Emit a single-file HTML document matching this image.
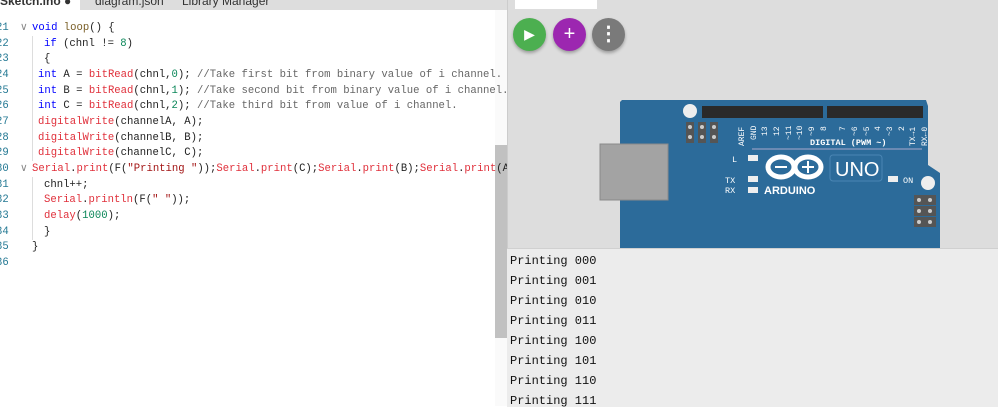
<!DOCTYPE html>
<html><head><style>
body{margin:0;width:998px;height:406px;overflow:hidden;background:#fff;position:relative;font-family:"Liberation Sans",sans-serif}
.tabbar{position:absolute;left:0;top:0;width:507px;height:10px;background:#ddd;z-index:3}
.tab{position:absolute;top:-6px;font-size:12px;color:#333}
.code{position:absolute;left:0;top:5px;width:507px;height:401px;overflow:hidden;font-family:"Liberation Mono",monospace;font-size:10.6px;white-space:pre;color:#222;z-index:2}
.ln{position:absolute;left:-4px;color:#237893;width:20px}
.l{position:absolute;height:15.66px;line-height:15.66px}
.k{color:#0000ff}.f{color:#e0303b}.fn{color:#795e26}.n{color:#098658}.c{color:#666}.s{color:#a31515}
.ar{position:absolute;left:20px;color:#888}
.guide{position:absolute;left:32px;width:1px;background:#ddd}
.scroll{position:absolute;left:495px;top:10px;width:12px;height:396px;background:#fafafa}
.thumb{position:absolute;left:495px;top:145px;width:12px;height:193px;background:#c1c1c1}
.right{position:absolute;left:507px;top:0;width:491px;height:406px;background:#ddd;border-left:1px solid #ccc;z-index:2}
.serial{position:absolute;left:507px;top:248px;width:491px;height:158px;background:#ececec;border-top:1px solid #d0d0d0;font-family:"Liberation Mono",monospace;font-size:12px;color:#111;z-index:4}
.serial div{position:absolute;left:3px}
.btn{position:absolute;top:18px;width:33px;height:33px;border-radius:50%;box-shadow:0 2px 3px rgba(0,0,0,.3);color:#fff;text-align:center;line-height:33px;font-size:20px;z-index:4}
svg{z-index:3}
</style></head><body>
<div class="tabbar"><div style="position:absolute;left:0;top:0;width:80px;height:10px;background:#fff"></div>
<span class="tab" style="left:0;font-weight:bold">Sketch.ino ●</span><span class="tab" style="left:95px">diagram.json</span><span class="tab" style="left:182px">Library Manager</span></div>
<div class="scroll"></div><div class="thumb"></div>
<div class="code">
<div class="guide" style="top:31px;height:125px"></div>
<div class="guide" style="top:172px;height:63px"></div>
<div class="l ln" style="top:-8px">20</div>
<div class="l ar" style="top:16px">∨</div><div class="l ar" style="top:157px">∨</div>
<div class="l" style="top:16px;left:32px"><span class="k">void</span> <span class="fn">loop</span>() {</div>
<div class="l" style="top:31.7px;left:44px"><span class="k">if</span> (chnl != <span class="n">8</span>)</div>
<div class="l" style="top:47.3px;left:44px">{</div>
<div class="l" style="top:63px;left:38px"><span class="k">int</span> A = <span class="f">bitRead</span>(chnl,<span class="n">0</span>); <span class="c">//Take first bit from binary value of i channel.</span></div>
<div class="l" style="top:78.6px;left:38px"><span class="k">int</span> B = <span class="f">bitRead</span>(chnl,<span class="n">1</span>); <span class="c">//Take second bit from binary value of i channel.</span></div>
<div class="l" style="top:94.3px;left:38px"><span class="k">int</span> C = <span class="f">bitRead</span>(chnl,<span class="n">2</span>); <span class="c">//Take third bit from value of i channel.</span></div>
<div class="l" style="top:110px;left:38px"><span class="f">digitalWrite</span>(channelA, A);</div>
<div class="l" style="top:125.6px;left:38px"><span class="f">digitalWrite</span>(channelB, B);</div>
<div class="l" style="top:141.3px;left:38px"><span class="f">digitalWrite</span>(channelC, C);</div>
<div class="l" style="top:157px;left:32px"><span class="f">Serial</span>.<span class="f">print</span>(F(<span class="s">"Printing "</span>));<span class="f">Serial</span>.<span class="f">print</span>(C);<span class="f">Serial</span>.<span class="f">print</span>(B);<span class="f">Serial</span>.<span class="f">print</span>(A</div>
<div class="l" style="top:172.6px;left:44px">chnl++;</div>
<div class="l" style="top:188.3px;left:44px"><span class="f">Serial</span>.<span class="f">println</span>(F(<span class="s">" "</span>));</div>
<div class="l" style="top:204px;left:44px"><span class="f">delay</span>(<span class="n">1000</span>);</div>
<div class="l" style="top:219.6px;left:44px">}</div>
<div class="l" style="top:235.3px;left:32px">}</div>
<div class="l ln" style="top:16px">21</div><div class="l ln" style="top:31.7px">22</div><div class="l ln" style="top:47.3px">23</div><div class="l ln" style="top:63px">24</div><div class="l ln" style="top:78.6px">25</div><div class="l ln" style="top:94.3px">26</div><div class="l ln" style="top:110px">27</div><div class="l ln" style="top:125.6px">28</div><div class="l ln" style="top:141.3px">29</div><div class="l ln" style="top:157px">30</div><div class="l ln" style="top:172.6px">31</div><div class="l ln" style="top:188.3px">32</div><div class="l ln" style="top:204px">33</div><div class="l ln" style="top:219.6px">34</div><div class="l ln" style="top:235.3px">35</div><div class="l ln" style="top:251px">36</div>
</div>
<div class="right"></div>
<div style="position:absolute;left:515px;top:0;width:82px;height:9px;background:#fff;z-index:3"></div>
<div class="btn" style="left:513px;background:#4caf50;font-size:14px">▶</div>
<div class="btn" style="left:553px;background:#9c27b0">+</div>
<div class="btn" style="left:592px;background:#7a7a7a;font-weight:bold">⋮</div>
<svg style="position:absolute;left:0;top:0" width="998" height="406" font-family="Liberation Mono,monospace">
<path d="M622 100 H926 L928 106 V165 L940 173 V248 H620 V102 Z" fill="#2c6b9a"/>
<rect x="600" y="144" width="68" height="56" fill="#a3a3a3" stroke="#8a8a8a"/>
<circle cx="690" cy="111" r="7" fill="#eee"/>
<circle cx="928" cy="183" r="7" fill="#eee"/>
<rect x="702" y="106" width="121" height="12" fill="#2a2a2a"/>
<rect x="827" y="106" width="96" height="12" fill="#2a2a2a"/>
<g fill="#555"><rect x="686" y="122" width="8" height="21"/><rect x="698" y="122" width="8" height="21"/><rect x="710" y="122" width="8" height="21"/>
<rect x="914" y="195" width="22" height="10"/><rect x="914" y="206" width="22" height="10"/><rect x="914" y="217" width="22" height="10"/></g>
<g fill="#ccc"><circle cx="690" cy="127" r="2"/><circle cx="690" cy="137" r="2"/><circle cx="702" cy="127" r="2"/><circle cx="702" cy="137" r="2"/><circle cx="714" cy="127" r="2"/><circle cx="714" cy="137" r="2"/>
<circle cx="919" cy="200" r="2"/><circle cx="930" cy="200" r="2"/><circle cx="919" cy="211" r="2"/><circle cx="930" cy="211" r="2"/><circle cx="919" cy="222" r="2"/><circle cx="930" cy="222" r="2"/></g>
<line x1="752" y1="149" x2="922" y2="149" stroke="#aac" stroke-width="1"/>
<text x="810" y="145" fill="#fff" font-size="8.5" font-weight="bold">DIGITAL (PWM ~)</text>
<g fill="#fff" font-size="8" transform="rotate(-90)">
<text x="-146" y="744">AREF</text><text x="-140" y="756">GND</text><text x="-136" y="767">13</text><text x="-136" y="779">12</text><text x="-140" y="791">~11</text><text x="-140" y="802">~10</text><text x="-136" y="814">~9</text><text x="-131" y="826">8</text><text x="-131" y="845">7</text><text x="-136" y="857">~6</text><text x="-136" y="869">~5</text><text x="-131" y="880">4</text><text x="-136" y="892">~3</text><text x="-131" y="904">2</text><text x="-146" y="915">TX→1</text><text x="-146" y="927">RX←0</text></g>
<g fill="#eee"><rect x="748" y="155" width="10" height="6"/><rect x="748" y="176" width="10" height="6"/><rect x="748" y="187" width="10" height="6"/><rect x="888" y="176" width="10" height="6"/></g>
<g fill="#fff" font-size="8.5"><text x="732" y="162">L</text><text x="725" y="183">TX</text><text x="725" y="193">RX</text><text x="903" y="183">ON</text></g>
<g fill="none" stroke="#fff" stroke-width="5"><ellipse cx="781" cy="167" rx="13" ry="10"/><ellipse cx="808" cy="167" rx="13" ry="10"/></g>
<g stroke="#fff" stroke-width="2"><line x1="775" y1="167" x2="787" y2="167"/><line x1="802" y1="167" x2="814" y2="167"/><line x1="808" y1="161" x2="808" y2="173"/></g>
<text x="764" y="194" fill="#fff" font-size="11" font-weight="bold" font-family="Liberation Sans,sans-serif">ARDUINO</text>
<rect x="830" y="155" width="52" height="26" rx="3" fill="none" stroke="#4a86b4"/>
<text x="835" y="176" fill="#fff" font-size="20" font-family="Liberation Sans,sans-serif">UNO</text>
</svg>
<div class="serial">
<div style="top:5px">Printing 000</div><div style="top:25px">Printing 001</div><div style="top:45px">Printing 010</div><div style="top:65px">Printing 011</div><div style="top:85px">Printing 100</div><div style="top:105px">Printing 101</div><div style="top:125px">Printing 110</div><div style="top:145px">Printing 111</div>
</div>
</body></html>
